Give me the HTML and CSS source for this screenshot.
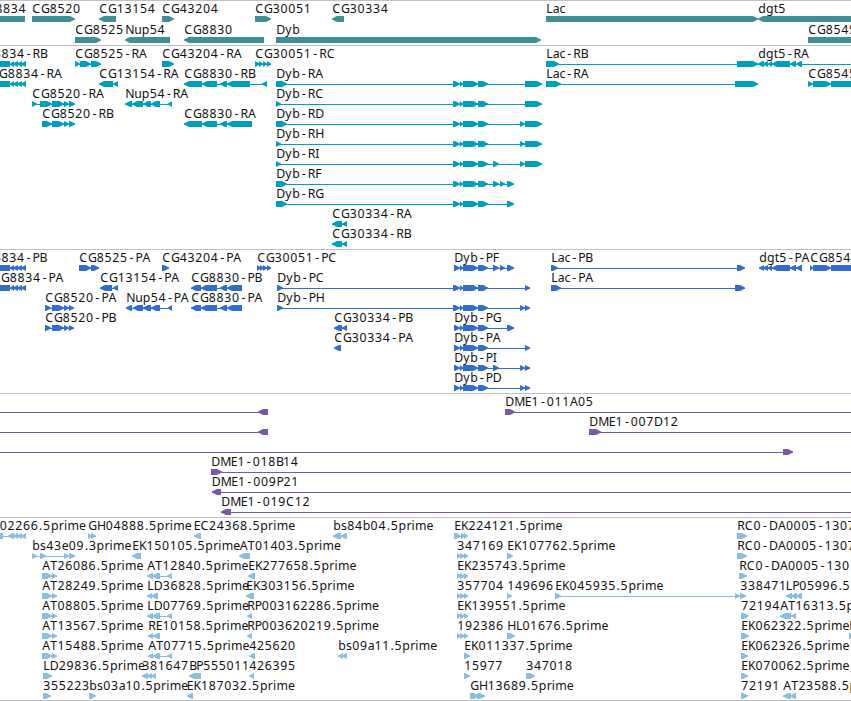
FILE: index.html
```html
<!DOCTYPE html>
<html lang="en">
<head>
<meta charset="utf-8">
<title>Genome browser</title>
<link rel="stylesheet" href="styles.css">
</head>
<body>
<main class="browser">
<svg class="track genes" data-track="genes"></svg>
<svg class="track transcripts" data-track="transcripts"></svg>
<svg class="track proteins" data-track="proteins"></svg>
<svg class="track clones" data-track="clones"></svg>
<svg class="track ests" data-track="ests"></svg>
</main>
<script src="tracks.js"></script>
</body>
</html>
```
FILE: styles.css
```css
body {
  margin: 0;
  background: #fff;
}
.browser {
  display: flex;
  flex-direction: column;
  width: 851px;
  height: 700px;
  overflow: hidden;
  border-bottom: 1px solid #c0c0c0;
}
.track {
  display: block;
  box-sizing: border-box;
  flex: none;
  width: 851px;
  border-top: 1px solid #c0c0c0;
  overflow: hidden;
}
.track text {
  font-family: "Noto Sans", "DejaVu Sans", sans-serif;
  font-size: 12.3px;
  fill: #111;
}
.genes { height: 45px; color: #3f8f94; }
.transcripts { height: 204px; color: #009fc0; }
.proteins { height: 144px; color: #306dcf; }
.clones { height: 124px; color: #7758a9; }
.ests { height: 183px; color: #8abede; }
.feature { fill: currentColor; }
.intron { fill: currentColor; shape-rendering: crispEdges; }
```
FILE: tracks.js
```js
// Each entry: row | label | label x | strand | origin | exon spans (3 units per pixel from origin)
const dyb = "549-570 570-578 578-624 624-655";
const pdyb = "552-570 570-578 578-624 624-655";
const tracks = {
  genes: `
0|CG8834|-22.5|-|0|-90-75
0|CG8520|32|+|0|96-225
0|CG13154|99|-|0|297-348
0|CG43204|162|+|0|486-522
0|CG30051|255|+|0|765-813
0|CG30334|332|-|270|186-222
0|Lac|546|+|540|18-655
0|dgt5|758|-|540|653-960
1|CG8525|75|+|0|225-303
1|Nup54|125|-|0|375-510
1|CG8830|184|-|0|552-792
1|Dyb|276|+|270|18-814
1|CG8545|808|+|540|804-960`,
  transcripts: `
0|CG8834-RB|-24|-|0|-30-29 29-42 40-54 52-65 63-77
0|CG8525-RA|75|+|0|225-240 240-273 273-303
0|CG43204-RA|162|+|0|486-522
0|CG30051-RC|255|+|0|765-779 777-790 789-802 800-814
0|Lac-RB|546|+|540|18-57 591-655
0|dgt5-RA|758|-|540|653-671 668-685 683-697 695-750 750-768 768-787 950-980
1|CG8834-RA|-10|-|0|-30-29 29-42 40-54 52-65 63-77
1|CG13154-RA|99|-|0|297-340 340-354
1|CG8830-RB|184|-|0|552-606 606-651 660-682 682-750 785-801
1|Dyb-RA|276|+|270|18-50 ${dyb} 765-817
1|Lac-RA|546|+|540|18-64 585-655
1|CG8545-RA|808|+|540|804-820 820-873 873-970
2|CG8520-RA|32|+|0|96-112 120-156 156-192 192-206 206-226
2|Nup54-RA|125|-|0|375-397 397-429 429-453 453-480 503-516
2|Dyb-RC|276|+|270|18-34 ${dyb} 765-817
3|CG8520-RB|42|+|0|126-155 156-192 192-206 206-226
3|CG8830-RA|184|-|0|552-606 606-651 660-682 682-756
3|Dyb-RD|276|+|270|18-50 ${dyb} 750-765 765-817
4|Dyb-RH|276|+|270|18-34 ${dyb} 750-765 765-817
5|Dyb-RI|276|+|270|18-34 ${dyb} 669-686 750-765 765-817
6|Dyb-RF|276|+|270|18-50 ${dyb} 669-686 690-706 711-733
7|Dyb-RG|276|+|270|18-50 ${dyb} 711-733
8|CG30334-RA|332|-|270|186-217 217-231
9|CG30334-RB|332|-|270|186-217 217-231`,
  proteins: `
0|CG8834-PB|-24|-|0|-30-29 29-42 40-54 52-65 63-77
0|CG8525-PA|79|+|0|237-273 273-297
0|CG43204-PA|162|+|0|486-508
0|CG30051-PC|257|+|0|771-783 781-793 790-802 800-814
0|Dyb-PF|454|+|270|${pdyb} 669-686 690-706 711-733
0|Lac-PB|551|+|540|33-53 591-616
0|dgt5-PA|759|-|540|656-672 670-685 683-697 695-750 750-768 768-786
0|CG8545-PA|810|+|540|810-820 820-873 873-970
1|CG8834-PA|-8|-|0|-30-29 29-42 40-54 52-65 63-77
1|CG13154-PA|100|-|0|300-336 338-354
1|CG8830-PB|191|-|0|573-603 603-651 660-682 682-726
1|Dyb-PC|277|+|270|21-38 ${dyb} 765-780
1|Lac-PA|551|+|540|33-64 585-616
2|CG8520-PA|45|+|0|135-154 156-192 192-206 206-222
2|Nup54-PA|126|-|0|378-397 399-429 429-453 453-480 503-516
2|CG8830-PA|191|-|0|573-603 603-651 660-682 682-726
2|Dyb-PH|277|+|270|21-38 ${dyb} 750-765 765-780
3|CG8520-PB|45|+|0|135-154 156-192 192-206 206-222
3|CG30334-PB|334|-|270|191-215 217-231
3|Dyb-PG|454|+|270|${pdyb} 711-733
4|CG30334-PA|334|-|270|191-213
4|Dyb-PA|454|+|270|${pdyb} 765-780
5|Dyb-PI|454|+|270|${pdyb} 669-686 750-765 765-780
6|Dyb-PD|454|+|270|${pdyb} 750-765 765-780`,
  clones: `
0||0|-|0|-60--30 774-804
0|DME1-011A05|505|+|0|1515-1545 2700-2730
1||0|-|0|-60--30 774-804
1|DME1-007D12|589|+|0|1767-1803 2700-2730
2||0|+|0|-60--30 2349-2379
3|DME1-018B14|211|+|200|33-67 2100-2130
4|DME1-009P21|211.5|-|200|36-63 2100-2130
5|DME1-019C12|221|-|200|62-93 2100-2130`,
  ests: `
0|02266.5prime|-0.5|-|0|-30-8 25-42 40-54 52-65 63-77
0|GH04888.5prime|88|+|0|264-277 274-288
0|EC24368.5prime|193.5|-|0|581-602
0|bs84b04.5prime|333|-|200|398-424 424-441
0|EK224121.5prime|454|+|440|42-62 62-74 72-84
0|RC0-DA0005-1307|737|+|640|291-322
1|bs43e09.3prime|32|+|0|96-112 120-138 192-206 206-226
1|EK150105.5prime|132|-|0|395-423
1|AT01403.5prime|239.5|-|0|717-749
1|347169|457|+|440|51-63 61-74 72-84
1|EK107762.5prime|507|+|440|201-219
1|RC0-DA0005-1307|737|+|640|291-322
2|AT26086.5prime|42|+|0|126-155 155-172
2|AT12840.5prime|147|-|0|441-458 456-480 500-516
2|EK277658.5prime|248|-|0|743-765
2|EK235743.5prime|457|+|440|51-63 61-74 72-84
2|RC0-DA0005-130|739|+|640|297-322
3|AT28249.5prime|42|+|0|126-155 155-172
3|LD36828.5prime|147|-|0|441-456 454-474
3|EK303156.5prime|246|-|0|737-762
3|357704|457|+|440|51-63 61-74 72-84
3|149696|507|+|440|201-216
3|EK045935.5prime|555|+|440|345-364 885-900 900-919
3|338471|740|+|0|
3|LP05996.5prime|785.5|-|640|437-455 453-470 468-486
4|AT08805.5prime|42|+|0|126-155 155-172
4|LD07769.5prime|147|-|0|441-458 456-480 500-516
4|RP003162286.5prime|247|-|0|740-756
4|EK139551.5prime|457|+|440|51-63 61-74 72-84
4|72194|741|+|640|303-328
4|AT16313.5prime|780|-|640|420-452 452-468
5|AT13567.5prime|42|+|0|126-155 155-172
5|RE10158.5prime|148|-|0|443-460 458-480
5|RP003620219.5prime|247|-|0|740-756
5|192386|457|+|440|51-63 61-74 72-84
5|HL01676.5prime|507|+|440|201-226
5|EK062322.5prime|741|+|640|303-328
5|E|849|+|640|627-660
6|AT15488.5prime|42|+|0|126-155 155-172
6|AT07715.5prime|148|-|0|443-460 458-480 500-516
6|425620|249|-|0|746-765
6|bs09a11.5prime|338|-|200|414-428 426-441
6|EK011337.5prime|464|+|440|72-91
6|EK062326.5prime|741|+|640|303-325
7|LD29836.5prime|43|+|0|129-155
7|381647|142|-|0|426-443 440-455 453-468
7|BP555011|189|-|0|567-603
7|426395|249|-|0|746-762
7|15977|464|+|440|72-91
7|347018|526|+|440|258-286
7|EK070062.5prime|741|+|640|303-325
8|355223|43|+|0|129-154
8|bs03a10.5prime|89|+|0|267-289
8|EK187032.5prime|186.5|-|0|560-579
8|GH13689.5prime|470|+|440|90-117 112-135
8|72191|741|+|640|303-325
8|AT23588.5prime|783|-|640|429-452 450-468`
};

// Advance widths for the label lettering
const advances = { A: 8, B: 7, C: 8.7, D: 9, E: 6.6, F: 6.6, G: 8.8, H: 8.6, I: 3.7, K: 7.6, L: 6.5,
  M: 10.5, N: 9, P: 7, R: 7.5, T: 7.1, a: 6.6, b: 7.8, c: 6.2, d: 7.8, e: 7, g: 7.7, i: 3.5,
  m: 11.5, p: 7.9, r: 5.1, s: 6.2, t: 4.5, u: 7.5, y: 7, "-": 7.6, ".": 4.6 };

// Side bearing that centres narrow glyphs in their advance
const bearings = { "-": 1.7, ".": 0.6 };

const svgNS = "http://www.w3.org/2000/svg";
function add(parent, name, attrs) {
  const node = document.createElementNS(svgNS, name);
  for (const key in attrs) node.setAttribute(key, attrs[key]);
  parent.appendChild(node);
  return node;
}

for (const svg of document.querySelectorAll(".track")) {
  const name = svg.dataset.track;
  const step = name === "genes" ? 21 : 20;
  for (const line of tracks[name].trim().split("\n")) {
    const [row, label, labelX, strand, origin, spans] = line.split("|");
    const top = Number(row) * step;
    const exons = (spans.match(/-?\d+--?\d+/g) || []).map(s => {
      const m = s.match(/^(-?\d+)-(-?\d+)$/);
      return [Math.round(Number(origin) + m[1] / 3), Math.round(Number(origin) + m[2] / 3)];
    });
    if (exons.length > 1) {
      const start = exons[0][0];
      add(svg, "rect", { class: "intron", x: start, y: top + 18, width: exons[exons.length - 1][1] - start, height: 1 });
    }
    for (const [a, b] of exons) {
      const head = Math.min(b - a, 5);
      const y = top + 15;
      const d = strand === "+"
        ? `M${a} ${y}H${b - head}L${b} ${y + 2.5}V${y + 3.5}L${b - head} ${y + 6}H${a}Z`
        : `M${b} ${y}H${a + head}L${a} ${y + 2.5}V${y + 3.5}L${a + head} ${y + 6}H${b}Z`;
      add(svg, "path", { class: "feature", d });
    }
    if (label) {
      let x = Number(labelX) + 0.3;
      const xs = [];
      for (const ch of label) {
        xs.push((x + (bearings[ch] || 0)).toFixed(1));
        x += advances[ch] || 7.75;
      }
      add(svg, "text", { x: xs.join(" "), y: top + 12 }).textContent = label;
    }
  }
}
```
